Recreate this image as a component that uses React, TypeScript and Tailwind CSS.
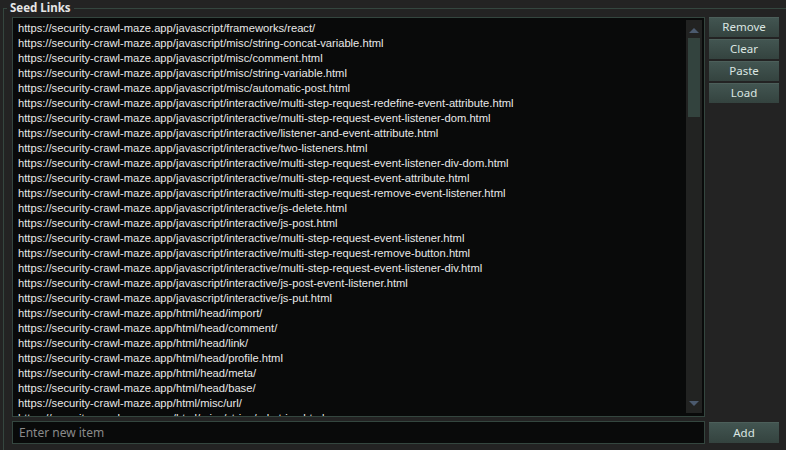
import React from "react";

const base = "https://security-crawl-maze.app/";

const links = [
  "javascript/frameworks/react/",
  "javascript/misc/string-concat-variable.html",
  "javascript/misc/comment.html",
  "javascript/misc/string-variable.html",
  "javascript/misc/automatic-post.html",
  "javascript/interactive/multi-step-request-redefine-event-attribute.html",
  "javascript/interactive/multi-step-request-event-listener-dom.html",
  "javascript/interactive/listener-and-event-attribute.html",
  "javascript/interactive/two-listeners.html",
  "javascript/interactive/multi-step-request-event-listener-div-dom.html",
  "javascript/interactive/multi-step-request-event-attribute.html",
  "javascript/interactive/multi-step-request-remove-event-listener.html",
  "javascript/interactive/js-delete.html",
  "javascript/interactive/js-post.html",
  "javascript/interactive/multi-step-request-event-listener.html",
  "javascript/interactive/multi-step-request-remove-button.html",
  "javascript/interactive/multi-step-request-event-listener-div.html",
  "javascript/interactive/js-post-event-listener.html",
  "javascript/interactive/js-put.html",
  "html/head/import/",
  "html/head/comment/",
  "html/head/link/",
  "html/head/profile.html",
  "html/head/meta/",
  "html/head/base/",
  "html/misc/url/",
  "html/misc/string/url-string.html",
];

const Button = ({ label, h = "h-[20px]" }: { label: string; h?: string }) => (
  <button
    className={`${h} w-full flex items-center justify-center bg-gradient-to-b from-[#435652] to-[#34433f] text-[#dbe6e2] text-[11.5px] shadow-[inset_0_1px_0_#4c5f5a]`}
  >
    {label}
  </button>
);

const App = () => {
  return (
    <div
      className="w-[786px] h-[450px] bg-[#232323] overflow-hidden"
      style={{ fontFamily: '"Noto Sans", "Open Sans", sans-serif' }}
    >
      <fieldset className="ml-[3px] h-[460px] border-l border-t border-[#34463f]">
        <legend className="ml-[3px] px-[3px] text-[11.5px] leading-[16px] font-bold text-[#e6e6e6]">
          Seed Links
        </legend>

        <div className="pl-[8px] pt-px flex flex-col gap-[4px]">
          <div className="flex gap-[4px]">
            {/* list box */}
            <div className="relative w-[693px] h-[400px] border border-[#34463f] bg-[#090a0a] overflow-hidden">
              <div
                className="pl-[5px] pt-[3px] text-[11.2px] leading-[15px] text-[#e8e8e8] whitespace-nowrap"
                style={{ fontFamily: '"Liberation Sans", Arial, sans-serif' }}
              >
                {links.map((l) => (
                  <div key={l}>{base + l}</div>
                ))}
              </div>

              {/* scrollbar */}
              <div className="absolute right-[2px] top-[2px] bottom-[3px] w-[16px] bg-[#222322] flex flex-col items-center">
                <svg width="12" height="8" viewBox="0 0 12 8" className="mt-[7px]">
                  <path d="M6 1 L11 6 L1 6 Z" fill="#4b5a6e" />
                </svg>
                <div className="mt-[3px] w-[12px] h-[79px] bg-[#33433e]" />
                <div className="flex-1" />
                <svg width="12" height="8" viewBox="0 0 12 8" className="mb-[5px]">
                  <path d="M1 1 L11 1 L6 6 Z" fill="#4b5a6e" />
                </svg>
              </div>
            </div>

            {/* side buttons */}
            <div className="w-[70px] flex flex-col gap-[2px]">
              <Button label="Remove" />
              <Button label="Clear" />
              <Button label="Paste" />
              <Button label="Load" />
            </div>
          </div>

          <div className="flex items-center gap-[4px]">
            <input
              placeholder="Enter new item"
              className="w-[693px] h-[23px] border border-[#34463f] bg-[#090a0a] px-[6px] py-0 text-[12px] text-[#e8e8e8] placeholder:text-[#8a8a8a] outline-none"
            />
            <div className="w-[70px]">
              <Button label="Add" h="h-[21px]" />
            </div>
          </div>
        </div>
      </fieldset>
    </div>
  );
};

export default App;
